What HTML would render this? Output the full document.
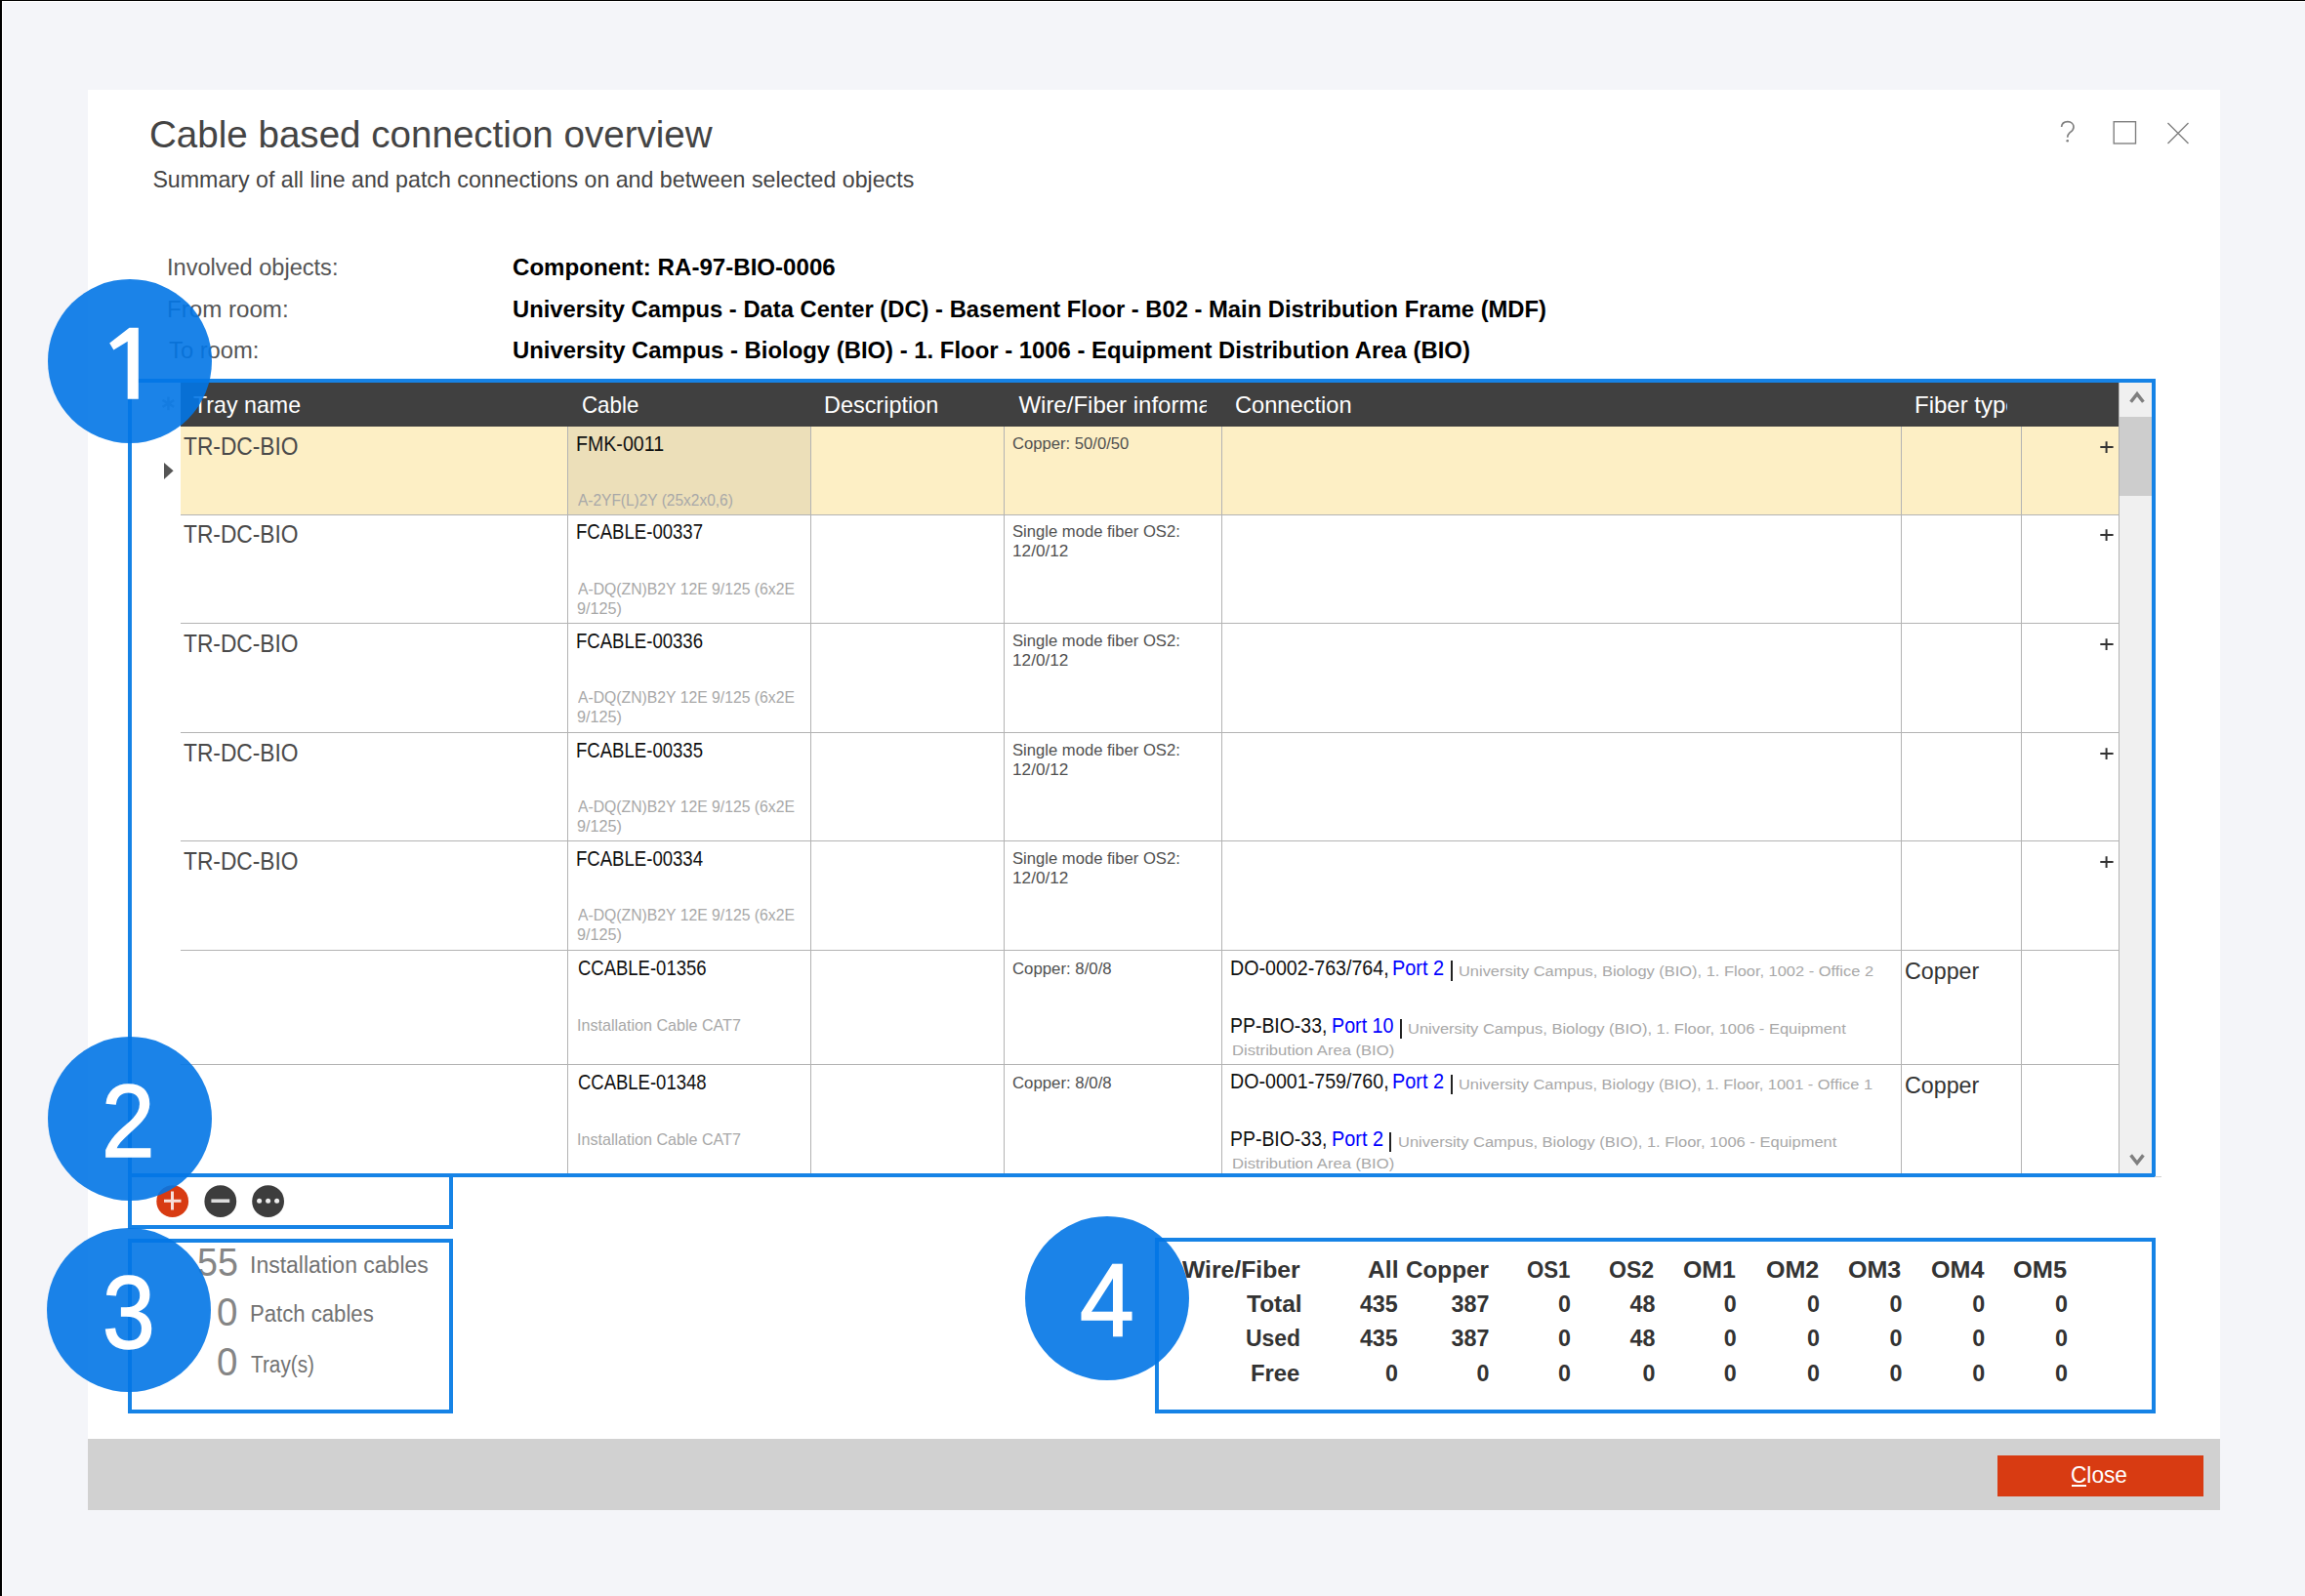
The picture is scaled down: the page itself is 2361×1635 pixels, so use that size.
<!DOCTYPE html>
<html><head><meta charset="utf-8"><title>Cable based connection overview</title><style>*{margin:0;padding:0;box-sizing:border-box}
html,body{width:2361px;height:1635px;overflow:hidden;background:#f4f5f9;font-family:"Liberation Sans",sans-serif;position:relative}
.t{position:absolute;white-space:nowrap;transform-origin:0 0}
.r{position:absolute}
.clip{position:absolute;overflow:hidden}
</style></head><body>
<div class="r" style="left:0px;top:0px;width:2361px;height:1px;background:#000;"></div>
<div class="r" style="left:0px;top:0px;width:2px;height:1635px;background:#000;"></div>
<div class="r" style="left:2px;top:1px;width:2359px;height:1px;background:#fff;"></div>
<div class="r" style="left:2px;top:1px;width:1px;height:1634px;background:#fff;"></div>
<div class="r" style="left:90px;top:92px;width:2184px;height:1382px;background:#fff;"></div>
<div class="r" style="left:90px;top:1474px;width:2184px;height:73px;background:#d1d1d1;"></div>
<div class="r" style="left:2046px;top:1491px;width:211px;height:42px;background:#d83b12;"></div>
<div class="t" style="left:2121.06px;top:1499.18px;font-size:24px;line-height:24px;color:#fff;transform:scaleX(0.9441);">Close</div>
<div class="r" style="left:2122px;top:1521px;width:15px;height:2px;background:#fff;"></div>
<div class="t" style="left:153.02px;top:118.19px;font-size:39px;line-height:39px;color:#444;transform:scaleX(0.9888);">Cable based connection overview</div>
<div class="t" style="left:156.40px;top:173.26px;font-size:23.2px;line-height:23.2px;color:#444;">Summary of all line and patch connections on and between selected objects</div>
<svg class="r" style="left:2100px;top:115px;" width="160" height="45" viewBox="2100 115 160 45"><rect x="2165.2" y="124.7" width="22.3" height="22.3" fill="none" stroke="#808080" stroke-width="1.4"/><path d="M2220.5 126 L2241.5 147 M2241.5 126 L2220.5 147" stroke="#808080" stroke-width="1.4" fill="none"/></svg>
<svg class="r" style="left:2100px;top:115px;" width="40" height="40" viewBox="2100 115 40 40"><path d="M2111.6 130 C2111.9 126.6 2114.6 124.7 2117.9 124.7 C2121.6 124.7 2124 127.1 2124 130.2 C2124 133.4 2121.6 134.6 2119.6 136.3 C2118.2 137.5 2117.7 138.6 2117.7 140.8" stroke="#808080" stroke-width="1.7" fill="none"/><circle cx="2117.7" cy="144.2" r="1.3" fill="#808080"/></svg>
<div class="t" style="left:170.55px;top:263.03px;font-size:23px;line-height:23px;color:#555;transform:scaleX(1.0240);">Involved objects:</div>
<div class="t" style="left:170.50px;top:305.53px;font-size:23px;line-height:23px;color:#555;transform:scaleX(1.0487);">From room:</div>
<div class="t" style="left:172.60px;top:347.63px;font-size:23px;line-height:23px;color:#555;transform:scaleX(1.0333);">To room:</div>
<div class="t" style="left:524.95px;top:263.03px;font-size:23px;line-height:23px;color:#000;font-weight:bold;transform:scaleX(1.0478);">Component: RA-97-BIO-0006</div>
<div class="t" style="left:524.97px;top:305.53px;font-size:23px;line-height:23px;color:#000;font-weight:bold;transform:scaleX(1.0332);">University Campus - Data Center (DC) - Basement Floor - B02 - Main Distribution Frame (MDF)</div>
<div class="t" style="left:524.96px;top:347.63px;font-size:23px;line-height:23px;color:#000;font-weight:bold;transform:scaleX(1.0382);">University Campus - Biology (BIO) - 1. Floor - 1006 - Equipment Distribution Area (BIO)</div>
<div class="r" style="left:185px;top:392px;width:1985px;height:45px;background:#404040;"></div>
<div class="r" style="left:185px;top:437px;width:1985px;height:90px;background:#fdefc5;"></div>
<div class="r" style="left:582px;top:437px;width:248px;height:90px;background:#ecdfb9;"></div>
<div class="r" style="left:185px;top:527px;width:1985px;height:1px;background:#b3b3b3;"></div>
<div class="r" style="left:185px;top:638px;width:1985px;height:1px;background:#b3b3b3;"></div>
<div class="r" style="left:185px;top:750px;width:1985px;height:1px;background:#b3b3b3;"></div>
<div class="r" style="left:185px;top:861px;width:1985px;height:1px;background:#b3b3b3;"></div>
<div class="r" style="left:185px;top:973px;width:1985px;height:1px;background:#b3b3b3;"></div>
<div class="r" style="left:185px;top:1090px;width:1985px;height:1px;background:#b3b3b3;"></div>
<div class="r" style="left:581px;top:437px;width:1px;height:765px;background:#b3b3b3;"></div>
<div class="r" style="left:830px;top:437px;width:1px;height:765px;background:#b3b3b3;"></div>
<div class="r" style="left:1028px;top:437px;width:1px;height:765px;background:#b3b3b3;"></div>
<div class="r" style="left:1251px;top:437px;width:1px;height:765px;background:#b3b3b3;"></div>
<div class="r" style="left:1947px;top:437px;width:1px;height:765px;background:#b3b3b3;"></div>
<div class="r" style="left:2070px;top:437px;width:1px;height:765px;background:#b3b3b3;"></div>
<div class="r" style="left:2170px;top:392px;width:1px;height:810px;background:#b3b3b3;"></div>
<div class="r" style="left:2171px;top:392px;width:33px;height:810px;background:#f0f0f0;"></div>
<div class="r" style="left:2171px;top:427px;width:33px;height:81px;background:#cdcdcd;"></div>
<svg class="r" style="left:2171px;top:392px;" width="33" height="810" viewBox="2171 392 33 810"><path d="M2182.6 411.8 L2189 403.6 L2195.4 411.8" stroke="#7f7f7f" stroke-width="3.4" fill="none"/><path d="M2182.6 1183.4 L2189 1191.6 L2195.4 1183.4" stroke="#7f7f7f" stroke-width="3.4" fill="none"/></svg>
<svg class="r" style="left:160px;top:400px;" width="30" height="100" viewBox="160 400 30 100"><path d="M168 474 L177.6 482.3 L168 491 Z" fill="#555"/><path d="M172.4 406.5 V420.2 M166.5 409.8 L178.3 416.9 M178.3 409.8 L166.5 416.9" stroke="#b8b8b8" stroke-width="2.6"/></svg>
<div class="t" style="left:197.73px;top:402.88px;font-size:24px;line-height:24px;color:#fff;transform:scaleX(0.9670);">Tray name</div>
<div class="t" style="left:596.07px;top:402.88px;font-size:24px;line-height:24px;color:#fff;transform:scaleX(0.9295);">Cable</div>
<div class="t" style="left:844.05px;top:402.88px;font-size:24px;line-height:24px;color:#fff;transform:scaleX(0.9761);">Description</div>
<div class="clip" style="left:1030px;top:392px;width:206px;height:45px;"><div style="position:absolute;left:-1030px;top:-392px;"><div class="t" style="left:1043.40px;top:402.88px;font-size:24px;line-height:24px;color:#fff;transform-origin:0 0;">Wire/Fiber information</div></div></div>
<div class="t" style="left:1265.42px;top:402.88px;font-size:24px;line-height:24px;color:#fff;transform:scaleX(0.9849);">Connection</div>
<div class="clip" style="left:1950px;top:392px;width:106px;height:45px;"><div style="position:absolute;left:-1950px;top:-392px;"><div class="t" style="left:1961.00px;top:402.88px;font-size:24px;line-height:24px;color:#fff;">Fiber type</div></div></div>
<div class="t" style="left:187.79px;top:444.64px;font-size:25px;line-height:25px;color:#4a4a4a;transform:scaleX(0.9102);">TR-DC-BIO</div>
<div class="t" style="left:590.22px;top:443.88px;font-size:22px;line-height:22px;color:#111;transform:scaleX(0.8908);">FMK-0011</div>
<div class="t" style="left:592.00px;top:505.21px;font-size:15.7px;line-height:15.7px;color:#a8a8a8;transform:scaleX(0.9862);">A-2YF(L)2Y (25x2x0,6)</div>
<div class="t" style="left:1037.18px;top:445.62px;font-size:16.4px;line-height:16.4px;color:#505050;transform:scaleX(1.0155);">Copper: 50/0/50</div>
<svg class="r" style="left:2150px;top:452px;" width="16" height="14" viewBox="0 0 16 14"><path d="M1.3 6 H14.6 M7.6 0.3 V12" stroke="#333" stroke-width="2" fill="none"/></svg>
<div class="t" style="left:187.79px;top:535.14px;font-size:25px;line-height:25px;color:#4a4a4a;transform:scaleX(0.9102);">TR-DC-BIO</div>
<div class="t" style="left:590.31px;top:534.38px;font-size:22px;line-height:22px;color:#111;transform:scaleX(0.8437);">FCABLE-00337</div>
<div class="t" style="left:592.00px;top:595.71px;font-size:15.7px;line-height:15.7px;color:#a8a8a8;transform:scaleX(1.0036);">A-DQ(ZN)B2Y 12E 9/125 (6x2E</div>
<div class="t" style="left:590.97px;top:615.71px;font-size:15.7px;line-height:15.7px;color:#a8a8a8;transform:scaleX(1.0326);">9/125)</div>
<div class="t" style="left:1037.19px;top:536.12px;font-size:16.4px;line-height:16.4px;color:#505050;transform:scaleX(1.0138);">Single mode fiber OS2:</div>
<div class="t" style="left:1037.15px;top:556.12px;font-size:16.4px;line-height:16.4px;color:#505050;transform:scaleX(1.0491);">12/0/12</div>
<svg class="r" style="left:2150px;top:542px;" width="16" height="14" viewBox="0 0 16 14"><path d="M1.3 6 H14.6 M7.6 0.3 V12" stroke="#333" stroke-width="2" fill="none"/></svg>
<div class="t" style="left:187.79px;top:646.64px;font-size:25px;line-height:25px;color:#4a4a4a;transform:scaleX(0.9102);">TR-DC-BIO</div>
<div class="t" style="left:590.31px;top:645.88px;font-size:22px;line-height:22px;color:#111;transform:scaleX(0.8437);">FCABLE-00336</div>
<div class="t" style="left:592.00px;top:707.21px;font-size:15.7px;line-height:15.7px;color:#a8a8a8;transform:scaleX(1.0036);">A-DQ(ZN)B2Y 12E 9/125 (6x2E</div>
<div class="t" style="left:590.97px;top:727.21px;font-size:15.7px;line-height:15.7px;color:#a8a8a8;transform:scaleX(1.0326);">9/125)</div>
<div class="t" style="left:1037.19px;top:647.62px;font-size:16.4px;line-height:16.4px;color:#505050;transform:scaleX(1.0138);">Single mode fiber OS2:</div>
<div class="t" style="left:1037.15px;top:667.62px;font-size:16.4px;line-height:16.4px;color:#505050;transform:scaleX(1.0491);">12/0/12</div>
<svg class="r" style="left:2150px;top:654px;" width="16" height="14" viewBox="0 0 16 14"><path d="M1.3 6 H14.6 M7.6 0.3 V12" stroke="#333" stroke-width="2" fill="none"/></svg>
<div class="t" style="left:187.79px;top:758.64px;font-size:25px;line-height:25px;color:#4a4a4a;transform:scaleX(0.9102);">TR-DC-BIO</div>
<div class="t" style="left:590.31px;top:757.88px;font-size:22px;line-height:22px;color:#111;transform:scaleX(0.8437);">FCABLE-00335</div>
<div class="t" style="left:592.00px;top:819.21px;font-size:15.7px;line-height:15.7px;color:#a8a8a8;transform:scaleX(1.0036);">A-DQ(ZN)B2Y 12E 9/125 (6x2E</div>
<div class="t" style="left:590.97px;top:839.21px;font-size:15.7px;line-height:15.7px;color:#a8a8a8;transform:scaleX(1.0326);">9/125)</div>
<div class="t" style="left:1037.19px;top:759.62px;font-size:16.4px;line-height:16.4px;color:#505050;transform:scaleX(1.0138);">Single mode fiber OS2:</div>
<div class="t" style="left:1037.15px;top:779.62px;font-size:16.4px;line-height:16.4px;color:#505050;transform:scaleX(1.0491);">12/0/12</div>
<svg class="r" style="left:2150px;top:766px;" width="16" height="14" viewBox="0 0 16 14"><path d="M1.3 6 H14.6 M7.6 0.3 V12" stroke="#333" stroke-width="2" fill="none"/></svg>
<div class="t" style="left:187.79px;top:869.64px;font-size:25px;line-height:25px;color:#4a4a4a;transform:scaleX(0.9102);">TR-DC-BIO</div>
<div class="t" style="left:590.31px;top:868.88px;font-size:22px;line-height:22px;color:#111;transform:scaleX(0.8437);">FCABLE-00334</div>
<div class="t" style="left:592.00px;top:930.21px;font-size:15.7px;line-height:15.7px;color:#a8a8a8;transform:scaleX(1.0036);">A-DQ(ZN)B2Y 12E 9/125 (6x2E</div>
<div class="t" style="left:590.97px;top:950.21px;font-size:15.7px;line-height:15.7px;color:#a8a8a8;transform:scaleX(1.0326);">9/125)</div>
<div class="t" style="left:1037.19px;top:870.62px;font-size:16.4px;line-height:16.4px;color:#505050;transform:scaleX(1.0138);">Single mode fiber OS2:</div>
<div class="t" style="left:1037.15px;top:890.62px;font-size:16.4px;line-height:16.4px;color:#505050;transform:scaleX(1.0491);">12/0/12</div>
<svg class="r" style="left:2150px;top:877px;" width="16" height="14" viewBox="0 0 16 14"><path d="M1.3 6 H14.6 M7.6 0.3 V12" stroke="#333" stroke-width="2" fill="none"/></svg>
<div class="t" style="left:591.56px;top:981.18px;font-size:22px;line-height:22px;color:#111;transform:scaleX(0.8400);">CCABLE-01356</div>
<div class="t" style="left:591.37px;top:1043.11px;font-size:15.7px;line-height:15.7px;color:#a8a8a8;transform:scaleX(1.0259);">Installation Cable CAT7</div>
<div class="t" style="left:1037.38px;top:983.52px;font-size:16.4px;line-height:16.4px;color:#505050;transform:scaleX(1.0235);">Copper: 8/0/8</div>
<div class="t" style="left:1951.23px;top:982.68px;font-size:24px;line-height:24px;color:#333;transform:scaleX(0.9688);">Copper</div>
<div class="t" style="left:591.56px;top:1098.18px;font-size:22px;line-height:22px;color:#111;transform:scaleX(0.8400);">CCABLE-01348</div>
<div class="t" style="left:591.37px;top:1160.11px;font-size:15.7px;line-height:15.7px;color:#a8a8a8;transform:scaleX(1.0259);">Installation Cable CAT7</div>
<div class="t" style="left:1037.38px;top:1100.52px;font-size:16.4px;line-height:16.4px;color:#505050;transform:scaleX(1.0235);">Copper: 8/0/8</div>
<div class="t" style="left:1951.23px;top:1099.68px;font-size:24px;line-height:24px;color:#333;transform:scaleX(0.9688);">Copper</div>
<div class="t" style="left:1259.86px;top:981.78px;font-size:21.4px;line-height:21.4px;color:#111;transform:scaleX(0.9179);">DO-0002-763/764,</div>
<div class="t" style="left:1426.44px;top:981.78px;font-size:21.4px;line-height:21.4px;color:#0000ff;transform:scaleX(0.9315);">Port 2</div>
<div class="r" style="left:1485.5px;top:984.4px;width:2.0px;height:20.5px;background:#222;"></div>
<div class="t" style="left:1493.93px;top:986.95px;font-size:15.3px;line-height:15.3px;color:#a8a8a8;transform:scaleX(1.0736);">University Campus, Biology (BIO), 1. Floor, 1002 - Office 2</div>
<div class="t" style="left:1259.88px;top:1041.18px;font-size:21.4px;line-height:21.4px;color:#111;transform:scaleX(0.9085);">PP-BIO-33,</div>
<div class="t" style="left:1363.96px;top:1041.18px;font-size:21.4px;line-height:21.4px;color:#0000ff;transform:scaleX(0.9212);">Port 10</div>
<div class="r" style="left:1434px;top:1043.8px;width:2px;height:20.5px;background:#222;"></div>
<div class="t" style="left:1441.92px;top:1046.35px;font-size:15.3px;line-height:15.3px;color:#a8a8a8;transform:scaleX(1.0771);">University Campus, Biology (BIO), 1. Floor, 1006 - Equipment</div>
<div class="t" style="left:1261.51px;top:1067.65px;font-size:15.3px;line-height:15.3px;color:#a8a8a8;transform:scaleX(1.0861);">Distribution Area (BIO)</div>
<div class="t" style="left:1259.86px;top:1098.08px;font-size:21.4px;line-height:21.4px;color:#111;transform:scaleX(0.9179);">DO-0001-759/760,</div>
<div class="t" style="left:1426.44px;top:1098.08px;font-size:21.4px;line-height:21.4px;color:#0000ff;transform:scaleX(0.9315);">Port 2</div>
<div class="r" style="left:1485.5px;top:1100.7px;width:2.0px;height:20.5px;background:#222;"></div>
<div class="t" style="left:1493.93px;top:1103.25px;font-size:15.3px;line-height:15.3px;color:#a8a8a8;transform:scaleX(1.0711);">University Campus, Biology (BIO), 1. Floor, 1001 - Office 1</div>
<div class="t" style="left:1259.88px;top:1157.08px;font-size:21.4px;line-height:21.4px;color:#111;transform:scaleX(0.9085);">PP-BIO-33,</div>
<div class="t" style="left:1363.94px;top:1157.08px;font-size:21.4px;line-height:21.4px;color:#0000ff;transform:scaleX(0.9296);">Port 2</div>
<div class="r" style="left:1423px;top:1159.7px;width:2px;height:20.5px;background:#222;"></div>
<div class="t" style="left:1431.52px;top:1162.25px;font-size:15.3px;line-height:15.3px;color:#a8a8a8;transform:scaleX(1.0786);">University Campus, Biology (BIO), 1. Floor, 1006 - Equipment</div>
<div class="t" style="left:1261.51px;top:1183.95px;font-size:15.3px;line-height:15.3px;color:#a8a8a8;transform:scaleX(1.0861);">Distribution Area (BIO)</div>
<div class="r" style="left:131px;top:388px;width:2077px;height:4px;background:#1683e6;"></div>
<div class="r" style="left:131px;top:1202px;width:2077px;height:4px;background:#1683e6;"></div>
<div class="r" style="left:131px;top:388px;width:4px;height:818px;background:#1683e6;"></div>
<div class="r" style="left:2204px;top:388px;width:4px;height:818px;background:#1683e6;"></div>
<div class="r" style="left:2207px;top:1205px;width:7px;height:1px;background:#d0d0d0;"></div>
<div class="r" style="left:131px;top:1202px;width:4px;height:57px;background:#1683e6;"></div>
<div class="r" style="left:460px;top:1202px;width:4px;height:57px;background:#1683e6;"></div>
<div class="r" style="left:131px;top:1255px;width:333px;height:4px;background:#1683e6;"></div>
<div class="r" style="left:131px;top:1269px;width:333px;height:4px;background:#1683e6;"></div>
<div class="r" style="left:131px;top:1444px;width:333px;height:4px;background:#1683e6;"></div>
<div class="r" style="left:131px;top:1269px;width:4px;height:179px;background:#1683e6;"></div>
<div class="r" style="left:460px;top:1269px;width:4px;height:179px;background:#1683e6;"></div>
<div class="r" style="left:1183px;top:1268px;width:1025px;height:4px;background:#1683e6;"></div>
<div class="r" style="left:1183px;top:1444px;width:1025px;height:4px;background:#1683e6;"></div>
<div class="r" style="left:1183px;top:1268px;width:4px;height:180px;background:#1683e6;"></div>
<div class="r" style="left:2204px;top:1268px;width:4px;height:180px;background:#1683e6;"></div>
<svg class="r" style="left:150px;top:1205px;" width="160" height="50" viewBox="150 1205 160 50"><circle cx="176.7" cy="1230.7" r="16.4" fill="#d83b12"/><path d="M168 1230.2 H185.5 M176.5 1220.6 V1239.5" stroke="#f6e0da" stroke-width="3"/><circle cx="225.8" cy="1230.7" r="16.4" fill="#3d3d3d"/><path d="M216.4 1230.2 H235.2" stroke="#dcdcdc" stroke-width="3.6"/><circle cx="274.6" cy="1230.7" r="16.4" fill="#3d3d3d"/><circle cx="265.6" cy="1230.2" r="2.5" fill="#eee"/><circle cx="274.6" cy="1230.2" r="2.5" fill="#eee"/><circle cx="283.6" cy="1230.2" r="2.5" fill="#eee"/></svg>
<div class="t" style="left:201.62px;top:1273.34px;font-size:40px;line-height:40px;color:#858585;transform:scaleX(0.9415);">55</div>
<div class="t" style="left:221.77px;top:1324.14px;font-size:40px;line-height:40px;color:#858585;transform:scaleX(0.9632);">0</div>
<div class="t" style="left:221.77px;top:1375.14px;font-size:40px;line-height:40px;color:#858585;transform:scaleX(0.9632);">0</div>
<div class="t" style="left:256.04px;top:1283.99px;font-size:24.7px;line-height:24.7px;color:#727272;transform:scaleX(0.9314);">Installation cables</div>
<div class="t" style="left:256.11px;top:1334.49px;font-size:24.7px;line-height:24.7px;color:#727272;transform:scaleX(0.8964);">Patch cables</div>
<div class="t" style="left:257.06px;top:1386.09px;font-size:24.7px;line-height:24.7px;color:#727272;transform:scaleX(0.8413);">Tray(s)</div>
<div class="t" style="left:1210.50px;top:1289.78px;font-size:23.3px;line-height:23.3px;color:#333;font-weight:bold;transform:scaleX(1.0614);">Wire/Fiber</div>
<div class="t" style="left:1276.90px;top:1325.08px;font-size:23.3px;line-height:23.3px;color:#333;font-weight:bold;transform:scaleX(1.0500);">Total</div>
<div class="t" style="left:1276.42px;top:1360.38px;font-size:23.3px;line-height:23.3px;color:#333;font-weight:bold;transform:scaleX(0.9836);">Used</div>
<div class="t" style="left:1281.35px;top:1396.08px;font-size:23.3px;line-height:23.3px;color:#333;font-weight:bold;transform:scaleX(1.0234);">Free</div>
<div class="t" style="left:1400.74px;top:1289.78px;font-size:23.3px;line-height:23.3px;color:#333;font-weight:bold;transform:scaleX(1.0593);">All</div>
<div class="t" style="left:1392.90px;top:1325.08px;font-size:23.3px;line-height:23.3px;color:#333;font-weight:bold;">435</div>
<div class="t" style="left:1392.90px;top:1360.38px;font-size:23.3px;line-height:23.3px;color:#333;font-weight:bold;">435</div>
<div class="t" style="left:1418.90px;top:1396.08px;font-size:23.3px;line-height:23.3px;color:#333;font-weight:bold;">0</div>
<div class="t" style="left:1439.76px;top:1289.78px;font-size:23.3px;line-height:23.3px;color:#333;font-weight:bold;transform:scaleX(1.0412);">Copper</div>
<div class="t" style="left:1486.60px;top:1325.08px;font-size:23.3px;line-height:23.3px;color:#333;font-weight:bold;">387</div>
<div class="t" style="left:1486.60px;top:1360.38px;font-size:23.3px;line-height:23.3px;color:#333;font-weight:bold;">387</div>
<div class="t" style="left:1512.60px;top:1396.08px;font-size:23.3px;line-height:23.3px;color:#333;font-weight:bold;">0</div>
<div class="t" style="left:1563.55px;top:1289.78px;font-size:23.3px;line-height:23.3px;color:#333;font-weight:bold;transform:scaleX(0.9533);">OS1</div>
<div class="t" style="left:1595.90px;top:1325.08px;font-size:23.3px;line-height:23.3px;color:#333;font-weight:bold;">0</div>
<div class="t" style="left:1595.90px;top:1360.38px;font-size:23.3px;line-height:23.3px;color:#333;font-weight:bold;">0</div>
<div class="t" style="left:1595.90px;top:1396.08px;font-size:23.3px;line-height:23.3px;color:#333;font-weight:bold;">0</div>
<div class="t" style="left:1648.41px;top:1289.78px;font-size:23.3px;line-height:23.3px;color:#333;font-weight:bold;transform:scaleX(0.9911);">OS2</div>
<div class="t" style="left:1669.50px;top:1325.08px;font-size:23.3px;line-height:23.3px;color:#333;font-weight:bold;">48</div>
<div class="t" style="left:1669.50px;top:1360.38px;font-size:23.3px;line-height:23.3px;color:#333;font-weight:bold;">48</div>
<div class="t" style="left:1682.50px;top:1396.08px;font-size:23.3px;line-height:23.3px;color:#333;font-weight:bold;">0</div>
<div class="t" style="left:1723.93px;top:1289.78px;font-size:23.3px;line-height:23.3px;color:#333;font-weight:bold;transform:scaleX(1.0673);">OM1</div>
<div class="t" style="left:1765.80px;top:1325.08px;font-size:23.3px;line-height:23.3px;color:#333;font-weight:bold;">0</div>
<div class="t" style="left:1765.80px;top:1360.38px;font-size:23.3px;line-height:23.3px;color:#333;font-weight:bold;">0</div>
<div class="t" style="left:1765.80px;top:1396.08px;font-size:23.3px;line-height:23.3px;color:#333;font-weight:bold;">0</div>
<div class="t" style="left:1808.62px;top:1289.78px;font-size:23.3px;line-height:23.3px;color:#333;font-weight:bold;transform:scaleX(1.0755);">OM2</div>
<div class="t" style="left:1850.90px;top:1325.08px;font-size:23.3px;line-height:23.3px;color:#333;font-weight:bold;">0</div>
<div class="t" style="left:1850.90px;top:1360.38px;font-size:23.3px;line-height:23.3px;color:#333;font-weight:bold;">0</div>
<div class="t" style="left:1850.90px;top:1396.08px;font-size:23.3px;line-height:23.3px;color:#333;font-weight:bold;">0</div>
<div class="t" style="left:1893.32px;top:1289.78px;font-size:23.3px;line-height:23.3px;color:#333;font-weight:bold;transform:scaleX(1.0755);">OM3</div>
<div class="t" style="left:1935.60px;top:1325.08px;font-size:23.3px;line-height:23.3px;color:#333;font-weight:bold;">0</div>
<div class="t" style="left:1935.60px;top:1360.38px;font-size:23.3px;line-height:23.3px;color:#333;font-weight:bold;">0</div>
<div class="t" style="left:1935.60px;top:1396.08px;font-size:23.3px;line-height:23.3px;color:#333;font-weight:bold;">0</div>
<div class="t" style="left:1977.92px;top:1289.78px;font-size:23.3px;line-height:23.3px;color:#333;font-weight:bold;transform:scaleX(1.0776);">OM4</div>
<div class="t" style="left:2020.30px;top:1325.08px;font-size:23.3px;line-height:23.3px;color:#333;font-weight:bold;">0</div>
<div class="t" style="left:2020.30px;top:1360.38px;font-size:23.3px;line-height:23.3px;color:#333;font-weight:bold;">0</div>
<div class="t" style="left:2020.30px;top:1396.08px;font-size:23.3px;line-height:23.3px;color:#333;font-weight:bold;">0</div>
<div class="t" style="left:2061.91px;top:1289.78px;font-size:23.3px;line-height:23.3px;color:#333;font-weight:bold;transform:scaleX(1.0898);">OM5</div>
<div class="t" style="left:2104.90px;top:1325.08px;font-size:23.3px;line-height:23.3px;color:#333;font-weight:bold;">0</div>
<div class="t" style="left:2104.90px;top:1360.38px;font-size:23.3px;line-height:23.3px;color:#333;font-weight:bold;">0</div>
<div class="t" style="left:2104.90px;top:1396.08px;font-size:23.3px;line-height:23.3px;color:#333;font-weight:bold;">0</div>
<div class="r" style="left:48.5px;top:286px;width:168px;height:168px;border-radius:50%;background:#0276e6;opacity:0.9;"></div>
<svg class="r" style="left:100px;top:330px;" width="50" height="85" viewBox="100 330 50 85"><path d="M132.5 335.8 L141.8 335.8 L141.8 408.8 L130.7 408.8 L130.7 349.8 L116.4 358.4 L112.2 351.6 Z" fill="#fff"/></svg>
<div class="r" style="left:48.599999999999994px;top:1061.7px;width:168px;height:168px;border-radius:50%;background:#0276e6;opacity:0.9;"></div>
<div class="t" style="left:104.38px;top:1095.17px;font-size:106px;line-height:106px;color:#fff;transform:scaleX(0.9245);-webkit-text-stroke:1.6px #fff;">2</div>
<div class="r" style="left:48px;top:1258px;width:168px;height:168px;border-radius:50%;background:#0276e6;opacity:0.9;"></div>
<div class="t" style="left:105.15px;top:1291.27px;font-size:106px;line-height:106px;color:#fff;transform:scaleX(0.9120);-webkit-text-stroke:1.6px #fff;">3</div>
<div class="r" style="left:1050.4px;top:1246.2px;width:168px;height:168px;border-radius:50%;background:#0276e6;opacity:0.9;"></div>
<div class="t" style="left:1106.31px;top:1279.07px;font-size:106px;line-height:106px;color:#fff;transform:scaleX(0.9444);-webkit-text-stroke:1.6px #fff;">4</div>
</body></html>
